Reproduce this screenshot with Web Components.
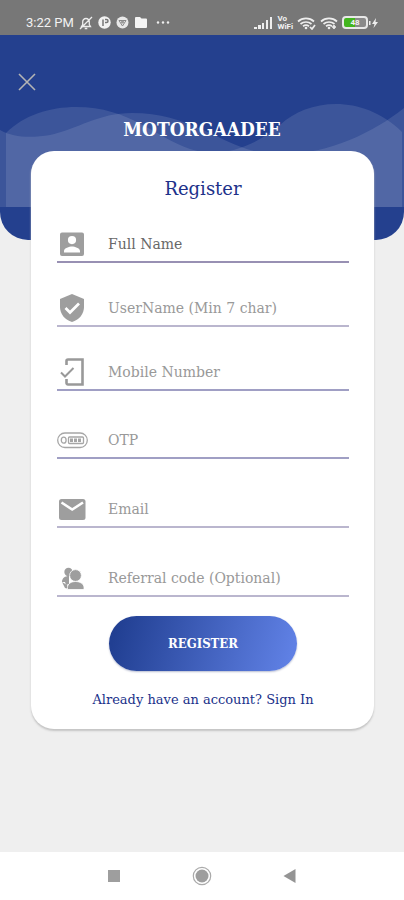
<!DOCTYPE html>
<html lang="en">
<head>
<meta charset="utf-8">
<meta name="viewport" content="width=device-width, initial-scale=1">
<title>Motorgaadee – Register</title>
<style>
body { margin: 0; background: #efefef; font-family: "DejaVu Serif", "Noto Serif", serif; }
</style>
</head>
<body>
<register-page></register-page>
<script>
function define(name, html, init) {
  const template = document.createElement('template');
  template.innerHTML = html;
  customElements.define(name, class extends HTMLElement {
    connectedCallback() {
      if (this.shadowRoot) return;
      this.attachShadow({ mode: 'open' }).append(template.content.cloneNode(true));
      if (init) init(this, this.shadowRoot);
    }
  });
}

define('status-bar', `
<style>
:host { display: flex; justify-content: space-between; align-items: center; height: 35px; box-sizing: border-box; padding: 10px 25px 0 26px; background: #777; color: #f2f2f2; font: 13px/16px Roboto, sans-serif; }
div { display: flex; align-items: center; gap: 5px; }
.right { gap: 4px; }
.vo { font: bold 8px/8px Roboto, sans-serif; }
svg { display: block; }
.battery { display: flex; gap: 1px; align-items: center; }
.level { box-sizing: border-box; width: 26px; height: 13px; border: 2px solid #e8e8e8; border-radius: 4px; background: linear-gradient(90deg, #43b51f 50%, #8a8a8a 50%); font: bold 8px/9px Roboto, sans-serif; text-align: center; }
</style>
<div>
  <span>3:22 PM</span>
  <svg width="14" height="14" viewBox="0 0 14 14" fill="none" stroke="#eee" stroke-width="1.3"><path d="M2.5 10.5h9l-1.2-2V6A3.3 3.3 0 0 0 7 2.500 3.300 3.300 0 0 0 3.700 6v2.500zM5.700 12.500h2.600M1 13 13 1"/></svg>
  <svg width="13" height="13" viewBox="0 0 13 13"><circle cx="6.500" cy="6.500" r="6.200" fill="#f2f2f2"/><path d="M5 10V3.500M7 3.500h1.500a1.500 1.500 0 0 1 0 3H7" fill="none" stroke="#777" stroke-width="1.500"/></svg>
  <svg width="13" height="13" viewBox="0 0 13 13"><circle cx="6.500" cy="6.500" r="6" fill="#e8e8e8"/><path d="M3 4.500h7L6.500 10z" fill="none" stroke="#888"/><circle cx="6.500" cy="6" r="1.600" fill="#999"/></svg>
  <svg width="14" height="13" viewBox="0 0 14 13"><path d="M1 2a1 1 0 0 1 1-1h4l1.500 1.500H12a1 1 0 0 1 1 1V11a1 1 0 0 1-1 1H2a1 1 0 0 1-1-1z" fill="#f4f4f4"/></svg>
  <svg width="20" height="13" viewBox="0 0 20 13" fill="#eee"><circle cx="5" cy="6.500" r="1.200"/><circle cx="10" cy="6.500" r="1.200"/><circle cx="15" cy="6.500" r="1.200"/></svg>
</div>
<div class="right">
  <svg width="19" height="12" viewBox="0 0 19 12" fill="#eee"><path d="M0 10h3v2H0zM4 8h3v4H4zM8 6h2v6H8zM12 3h2v9h-2zM16 0h2v12h-2z"/></svg>
  <span class="vo">Vo<br>WiFi</span>
  <svg width="19" height="14" viewBox="0 0 19 14"><g fill="none" stroke="#eee" stroke-width="1.700"><path d="M1 5.500a12 12 0 0 1 16 0M3.500 8a8.500 8.500 0 0 1 11 0M6 10.300a5 5 0 0 1 6 0M13 11l2 2 3-4"/></g><circle cx="9" cy="12" r="1.300" fill="#eee"/></svg>
  <svg width="18" height="14" viewBox="0 0 18 14"><g fill="none" stroke="#eee" stroke-width="1.700"><path d="M1 5.500a12 12 0 0 1 16 0M3.500 8a8.500 8.500 0 0 1 11 0M6 10.300a5 5 0 0 1 6 0M14 9v4M12 11h4"/></g><circle cx="9" cy="12" r="1.300" fill="#eee"/></svg>
  <span class="battery"><span class="level">48</span><svg width="10" height="12" viewBox="0 0 10 12" fill="#eee"><path d="M0 4h1.500v4H0zM7 1 3 7h2.500L4.500 11 9 5H6.500z"/></svg></span>
</div>`);

define('wave-header', `
<style>
:host { display: block; position: relative; overflow: hidden; height: 205px; border-radius: 0 0 28px 28px; background: #24408e; color: #fff; }
.waves { position: absolute; inset: 0; width: 100%; height: 100%; }
button { position: absolute; left: 15px; top: 35px; padding: 3px; border: 0; background: none; }
button svg { display: block; }
h1 { position: relative; margin: 0; padding-top: 81px; text-align: center; font: bold 19px/26px "DejaVu Serif Condensed", "DejaVu Serif", serif; }
</style>
<svg class="waves" viewBox="0 0 404 205" preserveAspectRatio="none" fill="#fff" fill-opacity=".11">
  <path d="M0 95C14 103 32 103 50 100 78 94 98 78 132 78 188 78 220 108 254 116 310 128 368 102 404 73V172H0z"/>
  <path d="M6 98C24 80 50 72 76 72 130 72 155 102 190 114 220 124 254 112 280 90 308 64 362 58 402 97V172H6z"/>
</svg>
<button type="button" aria-label="Close"><svg width="18" height="18" viewBox="0 0 18 18" fill="none" stroke="#b4b4b4" stroke-width="1.600"><path d="m1 1 16 16M17 1 1 17"/></svg></button>
<h1><slot></slot></h1>`);

const icons = {
  person: '<path fill-rule="evenodd" d="M5 2.500h20a2 2 0 0 1 2 2V24a2 2 0 0 1-2 2H5a2 2 0 0 1-2-2V4.500a2 2 0 0 1 2-2zM15 6a4 4 0 1 0 0 8.200A4 4 0 0 0 15 6zM7 22.500h16v-1.500c0-3-5.300-4.500-8-4.500s-8 1.500-8 4.500z"/>',
  shield: '<path d="m15 0 12 5v8c0 7-5 13-12 15C8 26 3 20 3 13V5z"/><path d="m8.500 14 4.500 4.500 9-9" fill="none" stroke="#fff" stroke-width="2.700"/>',
  phone: '<path d="M9.500 7V3a1.500 1.500 0 0 1 1.500-1.500h14.500V26.500H11A1.500 1.500 0 0 1 9.500 25v-4" fill="none" stroke="#999" stroke-width="2.600"/><path d="m4 14.500 4 4 8.500-8.500" fill="none" stroke="#999" stroke-width="2"/>',
  otp: '<g fill="none" stroke="#a6a6a6" stroke-width="1.300"><rect x="0.700" y="7" width="29.600" height="14.500" rx="7.200"/><rect x="11.500" y="11" width="15" height="6.500" rx="1"/><ellipse cx="6.700" cy="14.200" rx="2.400" ry="3"/><path d="M13 14.200h12" stroke-width="3.600" stroke-dasharray="3 1"/></g>',
  mail: '<rect x="2" y="4" width="26.500" height="21" rx="2.500"/><path d="M4.500 7.500 15.200 14.500 26 7.500" fill="none" stroke="#fff" stroke-width="2.600"/>',
  people: '<circle cx="11.500" cy="8" r="4.200"/><path d="M5 18c0-4 3-6 7-6v8l-3 1-1-3z"/><path d="m5 18 3 6 4 1-2-4z"/><g stroke="#fff" stroke-width=".8"><circle cx="18.500" cy="11.500" r="5.900"/><path d="M10.500 25.500v-2c0-4 4-6 8-6s8.500 2 8.500 6v2z"/></g>'
};
define('form-field', `
<style>
:host { display: block; }
label { display: flex; align-items: center; height: 34px; border-bottom: 2px solid var(--line, #bab6ce); }
svg { flex: none; width: 31px; height: 28px; margin-right: 20px; fill: #9e9e9e; }
input { flex: 1; min-width: 0; margin: 0; padding: 0; border: 0; outline: 0; background: none; font: 14px/20px "DejaVu Serif", serif; color: #666; }
input::placeholder { color: var(--ink, #999); opacity: 1; }
</style>
<label><svg viewBox="0 0 31 28" aria-hidden="true"></svg><input></label>`, (host, root) => {
  root.querySelector('svg').innerHTML = icons[host.getAttribute('icon')];
  const input = root.querySelector('input');
  input.placeholder = host.getAttribute('label');
  input.type = host.getAttribute('type') || 'text';
  input.setAttribute('aria-label', input.placeholder);
});

define('register-card', `
<style>
:host { display: block; position: relative; margin: -89px 30px 0 31px; padding: 24px 25px 19px 26px; background: #fff; border-radius: 23px; box-shadow: 0 2px 2px #c4c4c4; color: #20318a; text-align: center; }
h2 { margin: 0 0 24px; font: 18px/28px "DejaVu Serif", serif; }
form { display: grid; text-align: left; }
.near, .far { display: grid; gap: 28px; }
.far { gap: 33px; margin-top: 32px; }
.strong { --line: #9890b3; --ink: #686868; }
.mid { --line: #a09fc4; }
button { justify-self: center; width: 188px; height: 55px; margin-top: 19px; border: 0; border-radius: 28px; background: linear-gradient(105deg, #213f92 5%, #5f80e4 95%); box-shadow: 0 1px 2px #b8bdd0; color: #fff; font: bold 13px/20px "DejaVu Serif Condensed", "DejaVu Serif", serif; }
p { margin: 19px 0 0; font: 13px/20px "DejaVu Serif", serif; }
a { color: inherit; text-decoration: none; }
</style>
<h2>Register</h2>
<form>
  <div class="near">
    <form-field class="strong" icon="person" label="Full Name"></form-field>
    <form-field icon="shield" label="UserName (Min 7 char)"></form-field>
    <form-field class="mid" icon="phone" type="tel" label="Mobile Number"></form-field>
  </div>
  <div class="far">
    <form-field class="mid" icon="otp" label="OTP"></form-field>
    <form-field icon="mail" type="email" label="Email"></form-field>
    <form-field icon="people" label="Referral code (Optional)"></form-field>
  </div>
  <button type="button">REGISTER</button>
</form>
<p>Already have an account? <a href="#signin">Sign In</a></p>`);

define('nav-bar', `
<style>
:host { display: flex; justify-content: center; align-items: center; gap: 58px; height: 48px; background: #fff; }
button { padding: 0; border: 0; background: none; width: 30px; height: 30px; }
svg { display: block; margin: auto; }
</style>
<button type="button" aria-label="Recent apps"><svg width="20" height="20" viewBox="0 0 20 20" fill="#9e9e9e"><path d="M4 4h12v12H4z"/></svg></button>
<button type="button" aria-label="Home"><svg width="20" height="20" viewBox="0 0 20 20" fill="#9e9e9e"><circle cx="10" cy="10" r="6.500"/><circle cx="10" cy="10" r="8.700" fill="none" stroke="#aaa" stroke-width="1.200"/></svg></button>
<button type="button" aria-label="Back"><svg width="20" height="20" viewBox="0 0 20 20" fill="#949494"><path d="M3.500 10 15.500 3v14z"/></svg></button>`);

define('register-page', `
<style>
:host { display: flex; flex-direction: column; min-height: 100vh; }
main { flex: 1; }
</style>
<status-bar></status-bar>
<main>
  <wave-header>MOTORGAADEE</wave-header>
  <register-card></register-card>
</main>
<nav-bar></nav-bar>`);
</script>
</body>
</html>
